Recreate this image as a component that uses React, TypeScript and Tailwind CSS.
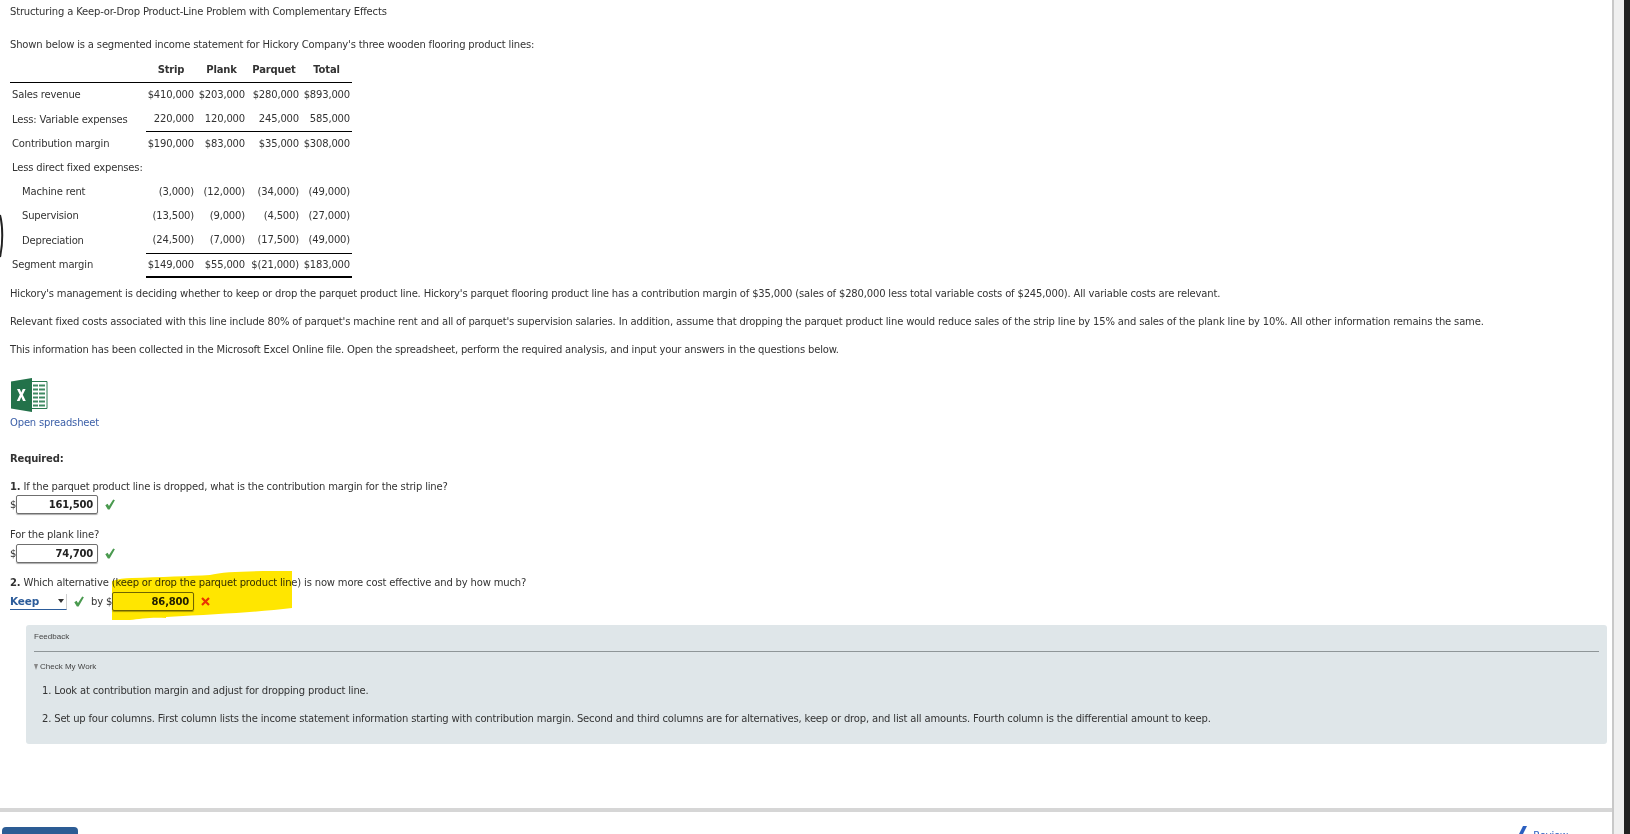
const rows: { label: string; v: string[]; h: string; indent?: boolean; rule?: "thin" | "thick" }[] = [
  { label: "Sales revenue", v: ["$410,000", "$203,000", "$280,000", "$893,000"], h: "h-[26px]" },
  { label: "Less: Variable expenses", v: ["220,000", "120,000", "245,000", "585,000"], h: "h-[23px]", rule: "thin" },
  { label: "Contribution margin", v: ["$190,000", "$83,000", "$35,000", "$308,000"], h: "h-[25px]" },
  { label: "Less direct fixed expenses:", v: ["", "", "", ""], h: "h-[24px]" },
  { label: "Machine rent", v: ["(3,000)", "(12,000)", "(34,000)", "(49,000)"], h: "h-[24px]", indent: true },
  { label: "Supervision", v: ["(13,500)", "(9,000)", "(4,500)", "(27,000)"], h: "h-[24px]", indent: true },
  { label: "Depreciation", v: ["(24,500)", "(7,000)", "(17,500)", "(49,000)"], h: "h-[25px]", indent: true, rule: "thin" },
  { label: "Segment margin", v: ["$149,000", "$55,000", "$(21,000)", "$183,000"], h: "h-[24px]", rule: "thick" },
];

function Check() {
  return (
    <svg width="10" height="11" viewBox="0 0 10 11" className="block shrink-0">
      <path d="M0.3 6.2 L2.6 4.8 L4 7 L8.2 0.4 L9.9 1.2 L4.6 10.6 L2.9 10.6 Z" fill="#4a9a4f" />
    </svg>
  );
}

function Cross() {
  return (
    <svg width="9" height="9" viewBox="0 0 9 9" className="block shrink-0">
      <path d="M1 1 L8 8 M8 1 L1 8" stroke="#ea3a1e" strokeWidth="2.2" />
    </svg>
  );
}

function Excel() {
  return (
    <svg width="37" height="34" viewBox="0 0 37 34" className="block ml-[1px]">
      <path d="M20 3.5 H36 V30.5 H20 Z" fill="#fff" stroke="#2a7a50" strokeWidth="1" />
      <path d="M22 7.5 H34 M22 11.5 H34 M22 15.5 H34 M22 19.5 H34 M22 23.5 H34 M22 27.5 H34" stroke="#3f8a62" strokeWidth="1.8" />
      <path d="M27.5 5 V29" stroke="#ffffff" strokeWidth="1" />
      <path d="M0 3.5 L21 0 V34 L0 30.5 Z" fill="#23724a" />
      <path d="M6 11 H8.8 L10.3 14.6 L11.8 11 H14.6 L11.8 16.8 L14.8 23 H12 L10.3 19.1 L8.6 23 H5.8 L8.8 16.8 Z" fill="#fff" />
    </svg>
  );
}

function Answer({ value }: { value: string }) {
  return (
    <div className="w-[82px] h-[19px] border border-[#6f6f6f] rounded-[2px] shadow-[0_1px_1px_#aaa] text-right pr-[4px] font-bold leading-[18px] text-[#222] text-[10px] tracking-[-0.2px]">
      {value}
    </div>
  );
}

export default function App() {
  return (
    <div className="relative h-[834px] w-[1630px] overflow-hidden bg-white font-['DejaVu_Sans',Verdana,sans-serif] text-[10px] tracking-[-0.17px] leading-[14px] text-[#333]">
      <div className="absolute top-0 bottom-0 right-0 w-[18px] flex">
        <div className="w-[12px] bg-[#efefef] border-l-2 border-[#c8c8c8]" />
        <div className="w-[6px] bg-[#222222]" />
      </div>
      <svg width="4" height="44" viewBox="0 0 4 44" className="absolute left-0 top-[214px]">
        <path d="M0 1 C3 12 3 30 0 43" stroke="#222" strokeWidth="2" fill="none" />
      </svg>

      <main className="w-[1612px] pl-[10px] pr-[6px] pt-[5px]">
        <p>Structuring a Keep-or-Drop Product-Line Problem with Complementary Effects</p>
        <p className="mt-[19px]">Shown below is a segmented income statement for Hickory Company's three wooden flooring product lines:</p>

        <table className="mt-[6px] border-collapse table-fixed w-[342px]">
          <colgroup>
            <col className="w-[136px]" />
            <col className="w-[50px]" />
            <col className="w-[51px]" />
            <col className="w-[54px]" />
            <col className="w-[51px]" />
          </colgroup>
          <thead>
            <tr className="h-[24px] border-b border-black">
              <th />
              {["Strip", "Plank", "Parquet", "Total"].map((h) => (
                <th key={h} className="font-bold text-center">{h}</th>
              ))}
            </tr>
          </thead>
          <tbody>
            {rows.map((r) => (
              <tr key={r.label} className={r.h}>
                <td className={`whitespace-nowrap ${r.indent ? "pl-[12px]" : "pl-[2px]"}`}>{r.label}</td>
                {r.v.map((c, i) => (
                  <td
                    key={i}
                    className={`text-right pr-[2px] whitespace-nowrap ${r.rule === "thin" ? "border-b border-black" : ""} ${r.rule === "thick" ? "border-b-2 border-black" : ""}`}
                  >
                    {c}
                  </td>
                ))}
              </tr>
            ))}
          </tbody>
        </table>

        <p className="mt-[9px] whitespace-nowrap">Hickory's management is deciding whether to keep or drop the parquet product line. Hickory's parquet flooring product line has a contribution margin of $35,000 (sales of $280,000 less total variable costs of $245,000). All variable costs are relevant.</p>
        <p className="mt-[14px] whitespace-nowrap">Relevant fixed costs associated with this line include 80% of parquet's machine rent and all of parquet's supervision salaries. In addition, assume that dropping the parquet product line would reduce sales of the strip line by 15% and sales of the plank line by 10%. All other information remains the same.</p>
        <p className="mt-[14px] whitespace-nowrap">This information has been collected in the Microsoft Excel Online file. Open the spreadsheet, perform the required analysis, and input your answers in the questions below.</p>

        <div className="mt-[21px]"><Excel /></div>
        <p className="mt-[4px] text-[#3b5fa8]">Open spreadsheet</p>

        <p className="mt-[22px] font-bold">Required:</p>
        <p className="mt-[14px]"><b>1.</b> If the parquet product line is dropped, what is the contribution margin for the strip line?</p>
        <div className="mt-[1px] flex items-center">
          <span className="w-[6px]">$</span>
          <Answer value="161,500" />
          <span className="ml-[7px]"><Check /></span>
        </div>
        <p className="mt-[14px]">For the plank line?</p>
        <div className="mt-[2px] flex items-center">
          <span className="w-[6px]">$</span>
          <Answer value="74,700" />
          <span className="ml-[7px]"><Check /></span>
        </div>
        <p className="mt-[13px]"><b>2.</b> Which alternative (keep or drop the parquet product line) is now more cost effective and by how much?</p>
        <div className="mt-[2px] flex items-center">
          <div className="relative w-[57px] h-[16px] border-b border-r border-[#2c5c9a] border-r-[#cfcfcf] text-[#2c5c9a] font-bold text-[10.5px] leading-[15px]">
            Keep
            <span className="absolute right-[2px] top-[5px] border-x-[3px] border-t-[4px] border-x-transparent border-t-[#333]" />
          </div>
          <span className="ml-[7px]"><Check /></span>
          <span className="ml-[7px] w-[21px] whitespace-nowrap">by $</span>
          <Answer value="86,800" />
          <span className="ml-[7px]"><Cross /></span>
        </div>

        <section className="mt-[14px] ml-[16px] w-[1581px] h-[119px] rounded-[3px] bg-[#dfe6e9] px-[8px] pt-[6px]">
          <p className="font-['Liberation_Sans',Arial,sans-serif] tracking-normal text-[8px] leading-[12px] text-[#444]">Feedback</p>
          <div className="mt-[8px] border-t border-[#8f9698]" />
          <p className="mt-[10px] flex items-center gap-[2px] font-['Liberation_Sans',Arial,sans-serif] tracking-normal text-[8px] leading-[10px] text-[#444]">
            <span className="border-x-[2.5px] border-t-[6px] border-x-transparent border-t-[#888]" />
            Check My Work
          </p>
          <ol className="mt-[12px] pl-[8px]">
            <li>1. Look at contribution margin and adjust for dropping product line.</li>
            <li className="mt-[14px]">2. Set up four columns. First column lists the income statement information starting with contribution margin. Second and third columns are for alternatives, keep or drop, and list all amounts. Fourth column is the differential amount to keep.</li>
          </ol>
        </section>
      </main>

      <footer className="absolute left-0 top-[808px] h-[26px] w-[1612px] border-t-[4px] border-t-[#d6d6d6] flex items-start justify-between">
        <div className="mt-[15px] ml-[2px] h-[20px] w-[76px] rounded-t-[4px] bg-[#2c5c94]" />
        <div className="mt-[14px] mr-[44px] flex items-start gap-[6px] text-[#2b5fc0]">
          <svg width="10" height="12" viewBox="0 0 10 12" className="block"><path d="M0 12 L6 0 L10 0 L4 12 Z" fill="#2b5fc0" /></svg>
          <span className="mt-[3px]">Review</span>
        </div>
      </footer>

      <svg width="182" height="51" viewBox="0 0 182 51" className="absolute left-[110px] top-[570px] mix-blend-multiply">
        <path d="M2 11 C8 9 14 8 22 8 C50 7 80 6 100 5 C115 1 150 1 182 1 L182 38 C150 42 110 44 56 47 L56 48 C40 47 30 49 20 50 L2 50 Z" fill="#ffe600" />
      </svg>
    </div>
  );
}
